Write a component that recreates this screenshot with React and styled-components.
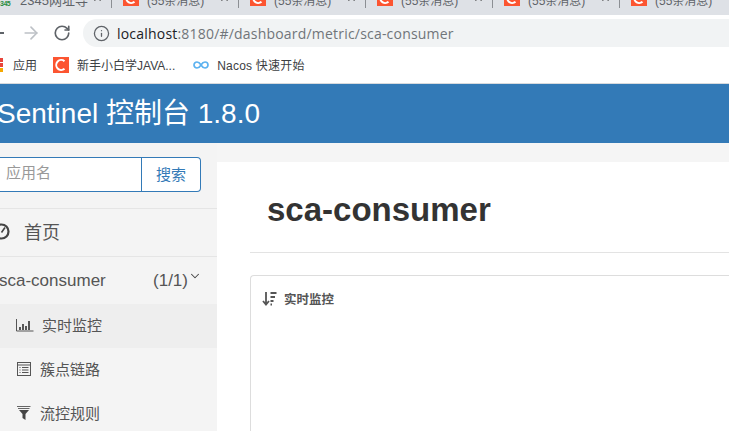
import React from "react";
import styled, { createGlobalStyle } from "styled-components";
import { ArrowRight, RotateCw, Info, X, ChevronDown } from "lucide-react";

const Global = createGlobalStyle`
  html, body { margin: 0; padding: 0; background: #fff; }
  * { box-sizing: border-box; }
  #root { width: 729px; height: 431px; overflow: hidden; }
`;
const font = `"Liberation Sans", Arial, "Noto Sans CJK SC", sans-serif`;

const Page = styled.div`
  width: 729px; height: 431px; overflow: hidden; display: flex; flex-direction: column;
  font-family: ${font}; color: #333;
`;
const TabStrip = styled.div`
  height: 15px; flex: none; background: #dee1e6; display: flex; overflow: hidden;
`;
const Tab = styled.div`
  flex: none; width: ${p => p.$w}px; height: 21px; margin-top: -13px; padding-left: ${p => p.$pad}px;
  border-right: 1px solid #8c8f94; display: flex; align-items: center; position: relative;
`;
const TabText = styled.span`
  font-size: ${p => p.$size || 12}px; color: #5f6368; margin-left: ${p => p.$ml ?? 8}px; margin-top: 3px;
  white-space: nowrap; flex: 1;
`;
const TabClose = styled.span`
  display: flex; margin-right: 8px; color: #444;
`;
const MiniLogo = styled.span`
  position: absolute; left: 0; top: 13px; font: bold 7px/7px ${font}; color: #2c8d3f; letter-spacing: -0.5px;
`;
const Toolbar = styled.div`
  height: 36px; flex: none; background: #fff; display: flex; align-items: center;
`;
const BackStub = styled.span`
  width: 4px; height: 2px; background: #5f6368; flex: none; margin-right: 17px;
`;
const NavBtn = styled.span`
  display: flex; flex: none; width: ${p => p.$w}px; margin-right: ${p => p.$mr}px; color: ${p => p.$c};
`;
const Omnibox = styled.div`
  flex: none; width: 660px; height: 28px; background: #f1f3f4; border-radius: 14px 0 0 14px;
  display: flex; align-items: center; padding-left: 10px; color: #5f6368;
`;
const Url = styled.span`
  font-family: "Open Sans", ${font}; font-size: 14px; margin-left: 7px; color: #70757a; letter-spacing: .2px;
  b { font-weight: 400; color: #202124; }
`;
const Bookmarks = styled.div`
  height: 33px; flex: none; background: #fff; border-bottom: 1px solid #d7dadd; display: flex; align-items: center;
  padding-bottom: 5px; font-size: 12px; color: #3c4043;
`;
const AppsStub = styled.span`
  width: 3px; height: 14px; flex: none; margin-right: 10px;
  background: linear-gradient(#e8453c 0 4px, transparent 4px 5px, #e8453c 5px 9px, transparent 9px 10px, #f5a800 10px 14px);
`;
const Bookmark = styled.span`
  display: flex; align-items: center; gap: 8px; margin-right: ${p => p.$mr}px; white-space: nowrap;
  letter-spacing: ${p => p.$ls || 0}px;
`;
const Header = styled.div`
  height: 59px; flex: none; background: #337ab7; color: #fff; font-size: 28px; line-height: 59px;
  white-space: nowrap; overflow: hidden;
  span { display: inline-block; margin-left: -3px; }
`;
const Body = styled.div`
  flex: 1; min-height: 0; display: flex; background: #f5f5f5;
`;
const Sidebar = styled.div`
  flex: none; width: 217px; background: #f4f4f4; overflow: hidden;
`;
const SearchRow = styled.div`
  height: 66px; padding-top: 14px; border-bottom: 1px solid #e5e5e5; display: flex; align-items: flex-start;
`;
const SearchInput = styled.div`
  flex: none; width: 152px; height: 35px; margin-left: -10px; background: #fff; border: 1px solid #337ab7;
  font-size: 15px; color: #999; line-height: 30px; padding-left: 15px;
`;
const SearchBtn = styled.div`
  flex: none; width: 59px; height: 35px; background: #fff; border: 1px solid #337ab7; border-left: none;
  border-radius: 0 4px 4px 0; color: #337ab7; font-size: 15px; text-align: center; line-height: 33px;
`;
const HomeRow = styled.div`
  height: 48px; border-bottom: 1px solid #e5e5e5; display: flex; align-items: center; font-size: 18px; color: #555;
  padding-bottom: 4px;
`;
const HomeGauge = styled.span`
  display: flex; flex: none; margin: 2px 14px 0 -7px;
`;
const AppRow = styled.div`
  height: 47px; display: flex; align-items: center; font-size: 17px; color: #555; margin-left: -1px;
  width: 203px;
  span:first-child { flex: 1; }
`;
const Chevron = styled.span`
  display: flex; margin-top: -9px; color: #444;
`;
const MenuItem = styled.div`
  height: 44px; display: flex; align-items: center; font-size: 15px; color: #555;
  background: ${p => (p.$active ? "#eee" : "transparent")};
  padding-left: ${p => p.$pad}px; padding-bottom: 3px; gap: ${p => p.$gap}px;
`;
const Main = styled.div`
  flex: 1; min-width: 0; margin-top: 19px; background: #fff; padding-left: 33px; overflow: hidden;
`;
const PageHeader = styled.div`
  height: 91px; border-bottom: 1px solid #e3e3e3; padding-left: 17px;
`;
const Title = styled.h1`
  margin: 0; font-size: 33px; font-weight: 700; line-height: 40px; padding-top: 28px; color: #333;
`;
const Card = styled.div`
  margin-top: 22px; height: 300px; border: 1px solid #ddd; border-right: none; border-radius: 4px 0 0 0;
  padding: 14px 0 0 11px;
`;
const CardHead = styled.div`
  display: flex; align-items: center; gap: 7px; font-size: 12.5px; font-weight: 700; color: #555; height: 16px;
`;

const CsdnIcon = ({ size = 16 }) => (
  <svg width={size} height={size} viewBox="0 0 16 16" style={{ flex: "none" }}>
    <rect width="16" height="16" fill="#fc5531" />
    <path d="M11.5 4.2A5 5 0 1 0 11.5 11.8" fill="none" stroke="#fff" strokeWidth="2" />
  </svg>
);
const NacosIcon = () => (
  <svg width="16" height="8" viewBox="0 0 16 8" style={{ flex: "none" }}>
    <path d="M8 4C6.8 2 5.6 1 4 1a3 3 0 0 0 0 6c1.600 0 2.800-1 4-3s2.400-3 4-3a3 3 0 0 1 0 6c-1.600 0-2.800-1-4-3Z" fill="none" stroke="#5cb2f0" strokeWidth="1.700" />
  </svg>
);
const Gauge = () => (
  <svg width="17" height="17" viewBox="0 0 17 17">
    <circle cx="8.500" cy="8.500" r="7" fill="none" stroke="#444" strokeWidth="2.200" />
    <path d="M8.500 9.500 12 4.500M3.500 8.500h2" stroke="#444" strokeWidth="1.600" />
  </svg>
);
const BarsIcon = () => (
  <svg width="18" height="14" viewBox="0 0 18 14" style={{ flex: "none" }}>
    <path d="M.5 1v12h17" fill="none" stroke="#555" />
    <path d="M3 9h2v3H3zM6 6h2v6H6zM9 8h2v4H9zM12 3h2v9h-2z" fill="#555" />
  </svg>
);
const ListIcon = () => (
  <svg width="14" height="14" viewBox="0 0 14 14" style={{ flex: "none" }}>
    <rect x=".5" y=".5" width="13" height="13" fill="none" stroke="#555" />
    <path d="M.5 3h13" stroke="#555" />
    <path d="M2.500 5.500h1M5 5.500h6.500M2.500 8h1M5 8h6.500M2.500 10.500h1M5 10.500h6.500" stroke="#555" />
  </svg>
);
const FilterIcon = () => (
  <svg width="14" height="14" viewBox="0 0 14 14" style={{ flex: "none" }}>
    <path d="M0 .5h13.500M1 2.500h11.500" stroke="#666" />
    <path d="M2 4h10L8.500 8v6l-3-2V8Z" fill="#444" />
  </svg>
);
const SortIcon = () => (
  <svg width="15" height="15" viewBox="0 0 15 15" style={{ flex: "none" }}>
    <path d="M4 1v12M1 10l3 3.500L7 10" fill="none" stroke="#555" strokeWidth="1.800" />
    <path d="M8.500 2h6M8.500 6h4.500M8.500 10h3M8.500 13.500h1.500" stroke="#555" strokeWidth="1.800" />
  </svg>
);

const tabs = [0, 1, 2, 3, 4];

export default function App() {
  return (
    <Page>
      <Global />
      <TabStrip>
        <Tab $w={112} $pad={20}>
          <MiniLogo>345</MiniLogo>
          <TabText $ml={0} $size={13}>2345网址导</TabText>
          <TabClose><X size={11} strokeWidth={2.5} /></TabClose>
        </Tab>
        {tabs.map(i => (
          <Tab key={i} $w={127} $pad={11}>
            <CsdnIcon />
            <TabText>(55条消息)</TabText>
            <TabClose><X size={11} strokeWidth={2.5} /></TabClose>
          </Tab>
        ))}
      </TabStrip>
      <Toolbar>
        <BackStub />
        <NavBtn $w={20} $mr={12} $c="#bdc1c6"><ArrowRight size={20} strokeWidth={2} /></NavBtn>
        <NavBtn $w={18} $mr={12} $c="#5f6368"><RotateCw size={18} strokeWidth={2.2} /></NavBtn>
        <Omnibox>
          <Info size={17} strokeWidth={1.8} />
          <Url><b>localhost</b>:8180/#/dashboard/metric/sca-consumer</Url>
        </Omnibox>
      </Toolbar>
      <Bookmarks>
        <AppsStub />
        <Bookmark $mr={16}>应用</Bookmark>
        <Bookmark $mr={18}><CsdnIcon />新手小白学JAVA...</Bookmark>
        <Bookmark $mr={0} $ls={0.2}><NacosIcon />Nacos 快速开始</Bookmark>
      </Bookmarks>
      <Header><span>Sentinel 控制台 1.8.0</span></Header>
      <Body>
        <Sidebar>
          <SearchRow>
            <SearchInput>应用名</SearchInput>
            <SearchBtn>搜索</SearchBtn>
          </SearchRow>
          <HomeRow><HomeGauge><Gauge /></HomeGauge>首页</HomeRow>
          <AppRow>
            <span>sca-consumer</span>
            <span>(1/1)</span>
            <Chevron><ChevronDown size={14} strokeWidth={1.8} /></Chevron>
          </AppRow>
          <MenuItem $active $pad={16} $gap={8}><BarsIcon />实时监控</MenuItem>
          <MenuItem $pad={17} $gap={9}><ListIcon />簇点链路</MenuItem>
          <MenuItem $pad={17} $gap={9}><FilterIcon />流控规则</MenuItem>
        </Sidebar>
        <Main>
          <PageHeader><Title>sca-consumer</Title></PageHeader>
          <Card>
            <CardHead>
              <SortIcon />
              实时监控
            </CardHead>
          </Card>
        </Main>
      </Body>
    </Page>
  );
}
